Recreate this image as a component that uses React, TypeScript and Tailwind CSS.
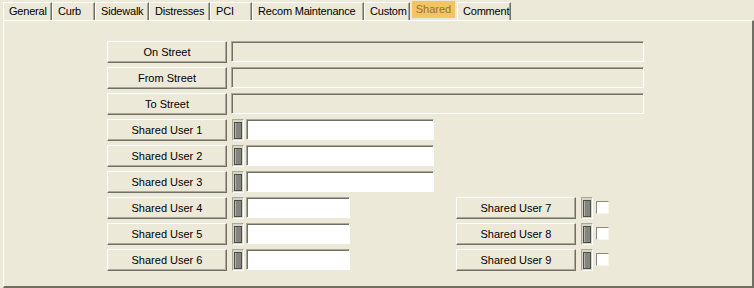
import type { ReactNode } from 'react'

const tabs = [
  { label: 'General', w: 'w-[49px]' },
  { label: 'Curb', w: 'w-[43px]' },
  { label: 'Sidewalk', w: 'w-[54px]' },
  { label: 'Distresses', w: 'w-[61px]' },
  { label: 'PCI', w: 'w-[42px]' },
  { label: 'Recom Maintenance', w: 'w-[112px]' },
  { label: 'Custom', w: 'w-[46px]' },
  { label: 'Shared', w: 'w-[47px]', active: true },
  { label: 'Comment', w: 'w-[54px]' }
]

function Tab({ label, w, active }: { label: string; w: string; active?: boolean }) {
  if (active) {
    return (
      <div className={`${w} h-[20px] flex items-start justify-center pt-[1px] px-[2px]`}>
        <div className="w-full h-[17px] bg-[#f2c464] text-[#9a7230] flex items-center justify-center leading-none pb-[1px]">
          {label}
        </div>
      </div>
    )
  }
  return (
    <div
      className={`${w} h-[18px] flex items-center justify-start pl-[5px] whitespace-nowrap tracking-[-0.2px] border-l border-t border-white border-r border-r-[#716f64] shadow-[inset_-1px_0_0_#aca899] leading-none`}
    >
      {label}
    </div>
  )
}

function XpButton({ children }: { children: ReactNode }) {
  return (
    <button className="w-[120px] h-[22px] shrink-0 bg-[#ece9d8] border-t border-l border-white border-b border-r border-b-[#716f64] border-r-[#716f64] shadow-[inset_-1px_-1px_0_#aca899] flex items-center justify-center leading-none">
      {children}
    </button>
  )
}

function Field({ width, white }: { width: string; white?: boolean }) {
  return (
    <div
      className={`${width} h-[21px] shrink-0 border-t border-l border-[#aca899] border-b border-r border-b-white border-r-white shadow-[inset_1px_1px_0_#716f64] ${white ? 'bg-white' : 'bg-[#ece9d8]'}`}
    />
  )
}

function Indicator() {
  return (
    <div className="w-[12px] h-[22px] shrink-0 border-t border-l border-[#aca899] border-b border-r border-b-white border-r-white bg-[#d8d5c6] flex items-center justify-center">
      <div className="w-[8px] h-[17px] border border-[#4e4e48] bg-[#85857f] shadow-[inset_1px_0_0_#b4b4ac]" />
    </div>
  )
}

function CheckBox() {
  return (
    <div className="w-[13px] h-[13px] shrink-0 bg-white border-t border-l border-[#8a887a] border-b border-r border-b-[#f6f5ef] border-r-[#f6f5ef]" />
  )
}

function UserCell({ n, fieldW }: { n: number; fieldW: string }) {
  return (
    <div className="flex items-start">
      <XpButton>Shared User {n}</XpButton>
      <div className="ml-[5px]">
        <Indicator />
      </div>
      <div className="ml-[2px]">
        <Field width={fieldW} white />
      </div>
    </div>
  )
}

function CheckCell({ n }: { n: number }) {
  return (
    <div className="flex items-start">
      <XpButton>Shared User {n}</XpButton>
      <div className="ml-[5px]">
        <Indicator />
      </div>
      <div className="ml-[3px] mt-[4px]">
        <CheckBox />
      </div>
    </div>
  )
}

export default function App() {
  return (
    <div
      className="w-[754px] h-[288px] bg-[#ece9d8] text-[11px] text-black overflow-hidden"
      style={{ fontFamily: '"Liberation Sans", Arial, sans-serif' }}
    >
      <div className="h-[20px] pl-[3px] flex items-end">
        {tabs.map((t) => (
          <Tab key={t.label} {...t} />
        ))}
      </div>

      <div className="ml-[3px] w-[751px] h-[268px] border-t border-l border-white border-r-2 border-b-2 border-r-[#716f64] border-b-[#716f64] pt-[20px] pl-[103px] flex flex-col gap-[4px]">
        {['On Street', 'From Street', 'To Street'].map((label) => (
          <div key={label} className="flex items-start gap-[4px]">
            <XpButton>{label}</XpButton>
            <Field width="w-[413px]" />
          </div>
        ))}

        {[1, 2, 3].map((n) => (
          <UserCell key={n} n={n} fieldW="w-[188px]" />
        ))}

        {[4, 5, 6].map((n) => (
          <div key={n} className="flex items-start">
            <div className="w-[349px]">
              <UserCell n={n} fieldW="w-[104px]" />
            </div>
            <CheckCell n={n + 3} />
          </div>
        ))}
      </div>
    </div>
  )
}
